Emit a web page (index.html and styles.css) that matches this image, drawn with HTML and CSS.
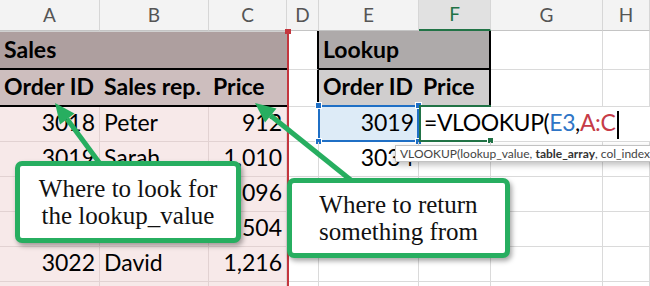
FILE: index.html
```html
<!DOCTYPE html>
<html lang="en">
<head>
    <meta charset="UTF-8">
    <title>VLOOKUP table_array</title>
    <link rel="stylesheet" href="styles.css">
</head>
<body>
    <div class="sheet">
        <div class="grid">
            <!-- column headers -->
            <div class="cell col-head">A</div>
            <div class="cell col-head">B</div>
            <div class="cell col-head">C</div>
            <div class="cell col-head">D</div>
            <div class="cell col-head">E</div>
            <div class="cell col-head active">F</div>
            <div class="cell col-head">G</div>
            <div class="cell col-head">H</div>

            <!-- row 1 -->
            <div class="cell sales-title">Sales</div>
            <div class="cell gap-col edge"></div>
            <div class="cell lookup-title">Lookup</div>
            <div class="cell"></div>
            <div class="cell"></div>

            <!-- row 2 -->
            <div class="cell sales-head">Order ID</div>
            <div class="cell sales-head">Sales rep.</div>
            <div class="cell sales-head">Price</div>
            <div class="cell gap-col edge"></div>
            <div class="cell lookup-head">Order ID</div>
            <div class="cell lookup-head last">Price</div>
            <div class="cell"></div>
            <div class="cell"></div>

            <!-- row 3 -->
            <div class="cell data num">3018</div>
            <div class="cell data">Peter</div>
            <div class="cell data num">912</div>
            <div class="cell gap-col"></div>
            <div class="cell picked num">3019
                <span class="sel-blue">
                    <i class="knob tl"></i><i class="knob tr"></i><i class="knob bl"></i><i class="knob br"></i>
                </span>
            </div>
            <div class="cell editing">
                <span class="sel-green"><i class="fill-knob"></i></span>
                =VLOOKUP(<span class="ref-blue">E3</span>,<span class="ref-red">A:C</span><span class="caret"></span>
            </div>

            <!-- row 4 -->
            <div class="cell data num">3019</div>
            <div class="cell data">Sarah</div>
            <div class="cell data num">1,010</div>
            <div class="cell gap-col"></div>
            <div class="cell num">3034</div>
            <div class="cell"></div>
            <div class="cell"></div>
            <div class="cell"></div>

            <!-- row 5 -->
            <div class="cell data num">3020</div>
            <div class="cell data">John</div>
            <div class="cell data num">1,096</div>
            <div class="cell gap-col"></div>
            <div class="cell"></div>
            <div class="cell"></div>
            <div class="cell"></div>
            <div class="cell"></div>

            <!-- row 6 -->
            <div class="cell data num">3021</div>
            <div class="cell data">Anna</div>
            <div class="cell data num">504</div>
            <div class="cell gap-col"></div>
            <div class="cell"></div>
            <div class="cell"></div>
            <div class="cell"></div>
            <div class="cell"></div>

            <!-- row 7 -->
            <div class="cell data num">3022</div>
            <div class="cell data">David</div>
            <div class="cell data num">1,216</div>
            <div class="cell gap-col"></div>
            <div class="cell"></div>
            <div class="cell"></div>
            <div class="cell"></div>
            <div class="cell"></div>

            <!-- row 8 -->
            <div class="cell data"></div>
            <div class="cell data"></div>
            <div class="cell data"></div>
            <div class="cell gap-col"></div>
            <div class="cell"></div>
            <div class="cell"></div>
            <div class="cell"></div>
            <div class="cell"></div>
        </div>

        <div class="range-ac"></div>

        <div class="tip">VLOOKUP(lookup_value, <b>table_array</b>, col_index_num, [range_lookup])</div>

        <svg class="arrows" width="650" height="286" viewBox="0 0 650 286">
            <line x1="101" y1="165" x2="67" y2="119"></line>
            <polygon points="55,103 74.5,113.5 60,124.5"></polygon>
            <line x1="352" y1="181" x2="270.5" y2="115.5"></line>
            <polygon points="255,103 276.5,108.5 265,122.5"></polygon>
        </svg>

        <div class="callout callout-find">Where to look for<br>the lookup_value</div>
        <div class="callout callout-return">Where to return<br>something from</div>
    </div>
</body>
</html>
```

FILE: styles.css
```css
body {
    margin: 0;
    background: #fff;
    font-family: Lato, "Liberation Sans", sans-serif;
}

.sheet {
    position: relative;
    width: 650px;
    height: 286px;
    overflow: hidden;
}

.grid {
    display: grid;
    grid-template-columns: 100px 109px 78px 32px 100px 72px 112px 47px;
    grid-template-rows: 31px 39px 37px 35px 35px 35px 35px 35px 35px;
}

.cell {
    position: relative;
    box-sizing: border-box;
    display: flex;
    align-items: flex-end;
    padding: 0 4px 4px;
    border-right: 1px solid #dadada;
    border-bottom: 1px solid #dadada;
    font-size: 23px;
    line-height: 1.2;
    color: #000;
    white-space: nowrap;
}

.num {
    justify-content: flex-end;
}

/* column letters */
.col-head {
    align-items: center;
    justify-content: center;
    padding: 0;
    background: #f3f3f3;
    color: #555;
    font-size: 19px;
    border-right-color: #d6d6d6;
    border-bottom-color: #c4c4c4;
}
.col-head.active {
    background: #e1e1e1;
    color: #217346;
    border-bottom: 2px solid #217346;
}

/* sales table */
.sales-title {
    grid-column: span 3;
    background: #ae9f9f;
    font-weight: 700;
    border-right: none;
    border-top: 1px solid #d0d0d0;
    border-bottom: 2px solid #000;
}
.sales-head {
    background: #cdbebe;
    font-weight: 700;
    border-right: none;
    border-bottom: 2px solid #000;
}
.data {
    background: #f7e9e9;
    border-color: #e2d2d2;
}

.edge {
    border-right: 2px solid #000;
}

/* lookup table */
.lookup-title {
    grid-column: span 2;
    background: #aeaaaa;
    font-weight: 700;
    border-right: 2px solid #000;
    border-bottom: 2px solid #000;
}
.lookup-head {
    background: #d0cece;
    font-weight: 700;
    border-right: none;
    border-bottom: 2px solid #000;
}
.lookup-head.last {
    border-right: 2px solid #000;
}

/* E3 selected, F3 in edit mode */
.picked {
    background: #ddebf7;
}
.sel-blue {
    position: absolute;
    top: -2px;
    left: -1px;
    right: -1px;
    bottom: -1px;
    border: 2px solid #1f6fc5;
}
.knob {
    position: absolute;
    width: 5px;
    height: 5px;
    background: #1f6fc5;
    border: 1px solid #fff;
}
.knob.tl { top: -5px; left: -5px; }
.knob.tr { top: -5px; right: -5px; }
.knob.bl { bottom: -5px; left: -5px; }
.knob.br { bottom: -5px; right: -5px; }

.editing {
    grid-column: span 3;
    background: #fff;
    border-right: none;
    padding-left: 5px;
    letter-spacing: -0.4px;
}
.sel-green {
    position: absolute;
    top: -2px;
    left: 0;
    width: 72px;
    bottom: -1px;
    box-sizing: border-box;
    border: 2px solid #217346;
    border-right: none;
}
.fill-knob {
    position: absolute;
    right: -3px;
    bottom: -4px;
    width: 5px;
    height: 5px;
    background: #217346;
    border: 1px solid #fff;
}
.ref-blue {
    color: #2e75c6;
}
.ref-red {
    color: #c63b47;
}
.caret {
    display: inline-block;
    width: 0;
    height: 28px;
    margin: 0 0 -2px 2px;
    border-left: 2px solid #000;
    align-self: flex-end;
}

/* A:C reference outline */
.range-ac {
    position: absolute;
    left: 0;
    top: 30px;
    width: 289px;
    height: 260px;
    box-sizing: border-box;
    border-right: 2px solid #c4363e;
}
.range-ac::after {
    content: "";
    position: absolute;
    right: -4px;
    top: -1px;
    width: 6px;
    height: 5px;
    background: #c4363e;
}

/* function hint */
.tip {
    position: absolute;
    left: 395px;
    top: 145px;
    height: 17px;
    box-sizing: border-box;
    padding: 0 4px;
    border: 1px solid #c2c2c2;
    background: #fff;
    box-shadow: 0 3px 6px rgba(0, 0, 0, 0.25);
    font-size: 12px;
    line-height: 15px;
    color: #444;
    white-space: nowrap;
}
.tip b {
    color: #333;
}

.arrows {
    position: absolute;
    left: 0;
    top: 0;
}
.arrows line {
    stroke: #27ae60;
    stroke-width: 5;
}
.arrows polygon {
    fill: #27ae60;
}

.callout {
    position: absolute;
    box-sizing: border-box;
    display: flex;
    align-items: center;
    justify-content: center;
    text-align: center;
    border: 5px solid #27ae60;
    border-radius: 7px;
    background: #fff;
    box-shadow: 2px 3px 5px rgba(0, 0, 0, 0.35);
    font-family: "Liberation Serif", serif;
    font-size: 25px;
    line-height: 27px;
    color: #111;
}
.callout-find {
    left: 15px;
    top: 161px;
    width: 226px;
    height: 82px;
}
.callout-return {
    left: 287px;
    top: 178px;
    width: 223px;
    height: 80px;
}
```
